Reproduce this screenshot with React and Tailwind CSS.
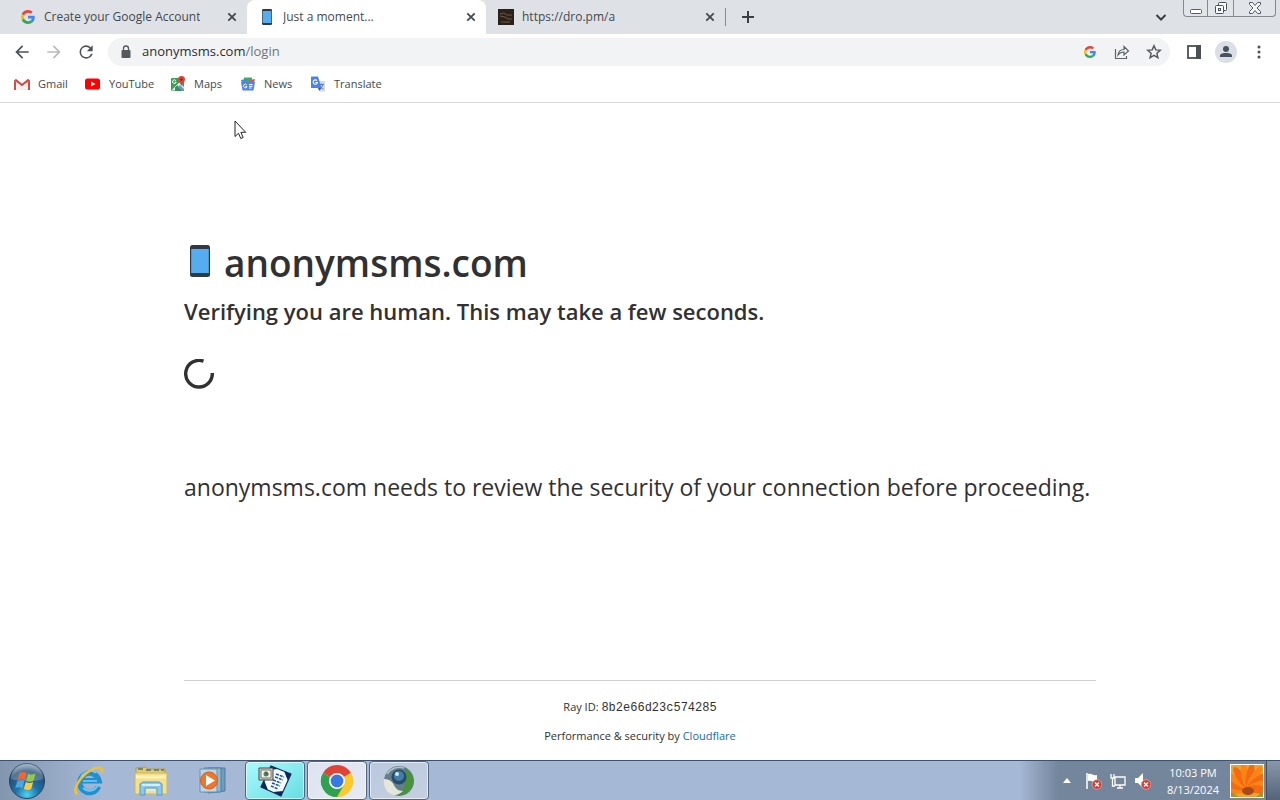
import React from "react";

const GoogleIcon = ({ className }) => (
  <svg viewBox="0 0 48 48" className={className}>
    <path fill="#EA4335" d="M24 9.500c3.500 0 6.700 1.200 9.200 3.600l6.900-6.900C35.900 2.400 30.500 0 24 0 14.600 0 6.500 5.400 2.600 13.200l8 6.200C12.400 13.700 17.700 9.500 24 9.500z" />
    <path fill="#4285F4" d="M47 24.500c0-1.600-.2-3.100-.4-4.500H24v9h12.900c-.6 3-2.300 5.500-4.800 7.200l7.700 6C44.400 38 47 31.800 47 24.500z" />
    <path fill="#FBBC05" d="M10.500 28.600c-.5-1.500-.8-3-.8-4.600s.3-3.100.8-4.600l-8-6.200C.9 16.500 0 20.100 0 24s.9 7.500 2.600 10.800l7.900-6.200z" />
    <path fill="#34A853" d="M24 48c6.500 0 11.900-2.100 15.900-5.800l-7.700-6c-2.200 1.400-4.900 2.300-8.200 2.300-6.300 0-11.600-4.200-13.500-9.900l-8 6.200C6.500 42.600 14.600 48 24 48z" />
  </svg>
);

const PhoneIcon = ({ className }) => (
  <svg viewBox="0 0 20 32" className={className}>
    <rect width="20" height="32" rx="2.500" fill="#2f3a44" />
    <rect x="1.200" y="4" width="17.600" height="24" fill="#55acee" />
  </svg>
);

const DarkSiteIcon = ({ className }) => (
  <svg viewBox="0 0 16 16" className={className}>
    <rect width="16" height="16" fill="#2a211c" />
    <path d="M2 5l4-1 3 2h5M2 7l5 1 3 2h4M3 13h9" stroke="#8a6742" fill="none" strokeWidth=".8" />
  </svg>
);

const CloseIcon = () => (
  <svg viewBox="0 0 10 10" className="size-[10px]">
    <path d="M1.300 1.300l7.400 7.400M8.700 1.300L1.300 8.700" stroke="#45494d" strokeWidth="1.800" />
  </svg>
);

const BackIcon = ({ className }) => (
  <svg viewBox="0 0 24 24" className={className} fill="currentColor">
    <path d="M20 11H7.830l5.590-5.590L12 4l-8 8 8 8 1.410-1.410L7.830 13H20v-2z" />
  </svg>
);

const ReloadIcon = () => (
  <svg viewBox="0 0 24 24" className="size-5" fill="#4d5156">
    <path d="M17.650 6.350A7.960 7.960 0 0012 4a8 8 0 108 10h-2.200A6 6 0 1112 6c1.660 0 3.140.690 4.220 1.780L13 11h7V4l-2.350 2.350z" />
  </svg>
);

const GmailIcon = () => (
  <svg viewBox="0 0 16 12" className="h-3 w-4">
    <path d="M0 1.500V12h2.600V4.600z" fill="#c5524a" />
    <path d="M16 1.500V12h-2.600V4.600z" fill="#c5524a" />
    <path d="M1.200 1.600L8 7l6.800-5.400" fill="none" stroke="#d9443a" strokeWidth="2" />
    <path d="M2 4v8h12V4L8 8.800z" fill="#f4f1f1" />
  </svg>
);

const YouTubeIcon = () => (
  <svg viewBox="0 0 16 12" className="h-3 w-4">
    <rect width="15" height="11" y=".5" rx="2.500" fill="#f00" />
    <path d="M6 3.500v5L10.500 6z" fill="#fff" />
  </svg>
);

const MapsIcon = () => (
  <svg viewBox="0 0 16 16" className="size-4">
    <rect x="1" y="2" width="13" height="13" rx="1" fill="#3f9d5b" />
    <path d="M2 14L9.500 6.500 14 11v3.500H2z" fill="#e4e7ea" />
    <path d="M5 11l2-2 5.500 6H5z" fill="#3c8f5b" />
    <path d="M10 9l4 4v2h-2L8 11z" fill="#6f93cf" />
    <path d="M1.500 14.500L9 7" stroke="#f4d35e" fill="none" />
    <path d="M5.800 4.600a1.800 1.800 0 10.300 1.600H4.700" stroke="#fff" fill="none" />
    <path d="M11.500 0A3.500 3.500 0 008 3.500c0 2.300 2.800 3.500 3.500 6.500.7-3 3.500-4.200 3.500-6.500A3.500 3.500 0 0011.500 0z" fill="#df4236" />
    <circle cx="11.500" cy="3.500" r="1.200" fill="#8f271f" />
  </svg>
);

const NewsIcon = () => (
  <svg viewBox="0 0 16 16" className="size-4">
    <path d="M4 1.500h8V7H4z" fill="#42a865" />
    <path d="M1 4l4-1 3 4H2z" fill="#4a86e8" />
    <path d="M10 4l5-1-1 4H9z" fill="#df5148" />
    <path d="M1 6h14l-1.500 8.500h-11z" fill="#4c84e8" />
    <path d="M6.700 9a1.800 1.800 0 10.300 1.500H5.500M9 8.500h3.500M9 10.300h3.500M9 12h2.500" stroke="#fff" fill="none" />
  </svg>
);

const TranslateIcon = () => (
  <svg viewBox="0 0 16 16" className="size-4">
    <path d="M6 5h8.500l.5.5V15l-.5.500H10z" fill="#d5d9df" />
    <path d="M8.500 8.500H14M11.300 7.500v1M13 8.500c-.5 2-2 3.500-3.500 4.500M10 10c1 1.500 2 2.300 3.500 3" stroke="#6c7a8c" fill="none" />
    <path d="M1.500.500H8L11.500 12h-10L1 11.500V1z" fill="#4a83e8" />
    <path d="M7 4.600a2.200 2.200 0 10.500 1.900H5.300" stroke="#fff" fill="none" strokeWidth="1.100" />
    <path d="M8 12h3.500L9.200 15z" fill="#3057b5" />
  </svg>
);

const ErrorBadge = () => (
  <g>
    <circle cx="12" cy="12.500" r="4.800" fill="#cf3d34" stroke="#e9b0ab" strokeWidth=".7" />
    <path d="M10 10.500l4 4M14 10.500l-4 4" stroke="#fff" strokeWidth="1.500" />
  </g>
);

const StartIcon = () => (
  <svg viewBox="0 0 38 38" className="size-[38px]">
    <defs>
      <radialGradient id="orb" cx="50%" cy="90%" r="85%">
        <stop offset="0" stopColor="#4fd3f5" />
        <stop offset=".4" stopColor="#1f6fa5" />
        <stop offset=".8" stopColor="#244e74" />
        <stop offset="1" stopColor="#7f9cb5" />
      </radialGradient>
    </defs>
    <circle cx="19" cy="19" r="17.500" fill="url(#orb)" stroke="#27425c" />
    <path d="M3 17a16 16 0 0132 0c-9 3-23 3-32 0z" fill="#fff" opacity=".22" />
    <path d="M11.500 11c2.500-1.500 4.500-1.300 7 0l-1.800 7c-2.500-1.300-4.500-1.400-7.200 0z" fill="#ee6631" />
    <path d="M20 11.700c2.500 1.300 4.600 1.300 7.500-.2l-2 7.200c-2.700 1.300-4.700 1.300-7.300 0z" fill="#95c945" />
    <path d="M9.200 19.300c2.500-1.300 4.700-1.300 7.100 0l-1.900 7c-2.300-1.300-4.500-1.400-7.200-.100z" fill="#4da5e2" />
    <path d="M17.800 20c2.500 1.300 4.700 1.300 7.400 0l-2 7c-2.700 1.300-4.700 1.300-7.300 0z" fill="#fcca3c" />
  </svg>
);

const ExplorerIcon = () => (
  <svg viewBox="0 0 32 32" className="size-8">
    <path d="M25.500 21.500A9.700 9.700 0 1126 15.800H9" fill="none" stroke="#238ed0" strokeWidth="5.500" />
    <path d="M24.500 20.500A9 9 0 0110 23" fill="none" stroke="#65c9f5" strokeWidth="2" />
    <path d="M8 12c2-5 10-8 15-4M10 16h14" fill="none" stroke="#78cff4" strokeWidth="1.500" />
    <path d="M4.500 29C-1 27 5 15 13 8.500 21 2 31 0 29 8" fill="none" stroke="#efc135" strokeWidth="2.600" />
  </svg>
);

const FolderIcon = () => (
  <svg viewBox="0 0 34 32" className="h-8 w-[34px]">
    <path d="M2 3l9-1 3 2h17v6H2z" fill="#ddca72" stroke="#b49b4d" />
    <path d="M4 4h5M12 5h5M20 5h5M27 5h3" stroke="#5c7550" strokeWidth="1.500" />
    <path d="M1 8h32v21H1z" fill="#f3df8e" stroke="#cfb65e" />
    <path d="M2 12h30" stroke="#fff2b5" strokeWidth="3" />
    <path d="M6 30V19l3-2h16l3 2v11h-5v-7H11v7z" fill="#8ac9ec" stroke="#5999c2" />
    <path d="M8 20h18M13 25h8" stroke="#d1effb" strokeWidth="2" />
  </svg>
);

const MediaIcon = () => (
  <svg viewBox="0 0 30 30" className="size-[30px]">
    <path d="M10 2h17v23l-17 2z" fill="#719dbb" stroke="#507d9e" />
    <path d="M6 2h17v24H6z" fill="#8cb9d3" stroke="#537f9f" />
    <path d="M2 3h17v23H2z" fill="#bdd6e4" stroke="#6d94ad" />
    <circle cx="11" cy="14.500" r="8.500" fill="#ec782c" stroke="#d65c21" />
    <path d="M8 9v11l9-5.500z" fill="#fff" />
  </svg>
);

const DocumentIcon = () => (
  <svg viewBox="0 0 36 36" className="size-9">
    <path d="M14 3l20 8-10 22L4 24z" fill="#f1fcff" stroke="#10295a" strokeWidth="1.200" />
    <path d="M14 3l7 3-9 1zM34 11l-3 7-4-10zM24 33l-8-4 10-1zM4 24l3-7 4 10z" fill="#0d2759" />
    <path d="M19 11l8 3M18 14l8 3M16 17l8 3M15 20l8 3M14 23l7 3" stroke="#244b9a" strokeWidth="1.500" strokeDasharray="3 1" />
    <path d="M2 5h14v12H2z" fill="#d3d3c8" stroke="#444" />
    <path d="M4 7h10v8H4z" fill="#f2f5e9" stroke="#777" />
    <circle cx="9" cy="11" r="2.500" fill="#3e8b67" />
    <path d="M9 8.500v2.500h2.500" stroke="#a62b36" fill="none" />
  </svg>
);

const ChromeIcon = () => (
  <svg viewBox="0 0 34 34" className="size-[34px]">
    <path d="M17 17L3.140 9A16 16 0 0130.860 9z" fill="#df4435" />
    <path d="M17 17L30.860 9A16 16 0 0117 33z" fill="#fbc929" />
    <path d="M17 17v16A16 16 0 013.140 9z" fill="#30a14e" />
    <path d="M17 9h13.860L24 21 17 33A16 16 0 0030.860 9z" fill="#fbc929" />
    <path d="M3.140 9L10 21l7 4 7-4-7 12A16 16 0 013.140 9z" fill="#30a14e" />
    <circle cx="17" cy="17" r="8" fill="#fff" />
    <circle cx="17" cy="17" r="6.400" fill="#3778e5" />
  </svg>
);

const GlobeIcon = () => (
  <svg viewBox="0 0 32 32" className="size-8">
    <circle cx="16" cy="16" r="15" fill="#637f8c" />
    <path d="M22 3c8 5 11 13 6 21-4 6-10 7-14 6 9-4 8-13 8-27z" fill="#49913d" />
    <path d="M1 14c7 0 9 4 11 8 2 3 5 4 8 4-5 5-10 5-14 2s-6-9-5-14z" fill="#e5e6d9" />
    <circle cx="16" cy="12" r="7.500" fill="#294b68" />
    <circle cx="16" cy="11" r="5" fill="#417fa9" />
    <circle cx="14" cy="9" r="2" fill="#c6e9f5" />
    <path d="M4 9c4-6 11-8 17-6" fill="none" stroke="#afc0c6" strokeWidth="1.500" />
  </svg>
);

const FlowerIcon = () => (
  <svg viewBox="0 0 32 32" className="size-8">
    <rect width="32" height="32" fill="#e9a62f" />
    {[-100, -78, -56, -34, -12, 10, 32, 54, 76, 98].map((angle, i) => (
      <ellipse
        key={angle}
        cx="17"
        cy="11"
        rx="4"
        ry="13"
        fill={i % 2 ? "#f26a12" : "#fb8414"}
        transform={`rotate(${angle} 17 23)`}
      />
    ))}
    <ellipse cx="17" cy="26" rx="6" ry="4" fill="#a8481b" />
    <path d="M0 27l8 5H0zM32 27l-7 5h7z" fill="#9b962d" />
  </svg>
);

const tabs = [
  { title: "Create your Google Account", icon: <GoogleIcon className="size-[14px]" /> },
  { title: "Just a moment...", icon: <PhoneIcon className="h-4 w-3" />, active: true },
  { title: "https://dro.pm/a", icon: <DarkSiteIcon className="size-4" /> },
];

const bookmarks = [
  { label: "Gmail", icon: <GmailIcon />, width: "w-[71px]" },
  { label: "YouTube", icon: <YouTubeIcon />, width: "w-[85px]" },
  { label: "Maps", icon: <MapsIcon />, width: "w-[70px]" },
  { label: "News", icon: <NewsIcon />, width: "w-[70px]" },
  { label: "Translate", icon: <TranslateIcon />, width: "w-[80px]" },
];

const pinned = [
  { name: "Internet Explorer", icon: <ExplorerIcon /> },
  { name: "Windows Explorer", icon: <FolderIcon /> },
  { name: "Media Player", icon: <MediaIcon /> },
];

const running = [
  { name: "Documents", icon: <DocumentIcon />, color: "from-[#a8fbfa] to-[#67dce5]" },
  { name: "Google Chrome", icon: <ChromeIcon />, color: "from-[#dce3f0] to-[#e7eaf4]" },
  { name: "Network", icon: <GlobeIcon />, color: "from-[#b9c9df] to-[#c5cfe0]" },
];

const TabStrip = () => (
  <header className="flex h-[34px] bg-[#dee1e6] pl-2">
    <div className="flex" role="tablist">
      {tabs.map((tab) => (
        <div
          key={tab.title}
          className={`flex h-[34px] w-[239px] items-center ${
            tab.active ? "rounded-t-lg bg-white" : ""
          }`}
        >
          <button
            role="tab"
            aria-selected={!!tab.active}
            className="flex min-w-0 flex-1 items-center gap-2 pl-3 text-left text-xs text-[#45494d]"
          >
            <span className="flex w-4 justify-center">{tab.icon}</span>
            <span className="truncate">{tab.title}</span>
          </button>
          <button aria-label="Close tab" className="mr-[9px] p-px">
            <CloseIcon />
          </button>
        </div>
      ))}
    </div>
    <div className="my-2 w-px bg-[#898d91]" />
    <button aria-label="New tab" className="px-4">
      <svg viewBox="0 0 12 12" className="size-3">
        <path d="M6 0v12M0 6h12" stroke="#3c4043" strokeWidth="2" />
      </svg>
    </button>
    <button aria-label="Search tabs" className="ml-auto px-4">
      <svg viewBox="0 0 12 12" className="size-3">
        <path d="M1.500 4L6 8.500 10.500 4" fill="none" stroke="#3c4043" strokeWidth="2" />
      </svg>
    </button>
    <div className="mr-1 flex h-[17px] divide-x divide-[#83898f] rounded-b border border-t-0 border-[#83898f] bg-[#e1e4e8]">
      <button aria-label="Minimize" className="flex w-6 items-center justify-center">
        <svg viewBox="0 0 12 12" className="size-3">
          <rect x=".5" y="7.500" width="11" height="4" rx="1" fill="#fff" stroke="#555b62" />
        </svg>
      </button>
      <button aria-label="Restore" className="flex w-[26px] items-center justify-center">
        <svg viewBox="0 0 14 14" className="size-[14px]" fill="#f8f9fa" stroke="#4b5056">
          <rect x="4.500" y="1.500" width="8" height="8" rx="1" />
          <rect x="1.500" y="4.500" width="8" height="8" rx="1" />
          <rect x="4.500" y="7.500" width="2" height="2" />
        </svg>
      </button>
      <button aria-label="Close" className="flex w-[41px] items-center justify-center">
        <svg viewBox="0 0 14 12" className="h-3 w-[14px]">
          <path d="M1.500.500h3L7 3.500l2.500-3h3v2L9 6l3.500 3.500v2h-3L7 8.500l-2.500 3h-3v-2L5 6 1.500 2.500z" fill="#f8f9fa" stroke="#555b62" />
        </svg>
      </button>
    </div>
  </header>
);

const Toolbar = () => (
  <div className="flex h-9 items-center bg-white pl-3 pr-[13px]">
    <button aria-label="Back" className="mr-3"><BackIcon className="size-5 text-[#4d5156]" /></button>
    <button aria-label="Forward" className="mr-3"><BackIcon className="size-5 rotate-180 text-[#b8babd]" /></button>
    <button aria-label="Reload" className="mr-3"><ReloadIcon /></button>
    <div className="flex h-7 flex-1 items-center rounded-full bg-[#f1f3f4] pl-[13px] pr-2">
      <svg viewBox="0 0 10 14" className="h-[14px] w-[10px]">
        <path d="M2.500 6V3.500a2.500 2.500 0 015 0V6" fill="none" stroke="#55595e" strokeWidth="1.300" />
        <rect x=".5" y="5" width="9" height="8" rx="1" fill="#55595e" />
      </svg>
      <a href="#login" className="ml-[11px] flex-1 text-[13px] text-[#2b2e31]">
        anonymsms.com<span className="text-[#707478]">/login</span>
      </a>
      <button aria-label="Google search" className="mr-[18px]"><GoogleIcon className="size-3" /></button>
      <button aria-label="Share" className="mr-4">
        <svg viewBox="0 0 16 16" className="size-4" fill="none" stroke="#5f6368" strokeWidth="1.200">
          <path d="M1.500 5v9.500h11V12M4 11c.5-4 3-5.500 6-5.500V2.500L14.500 7 10 11V8C7.500 8 5.500 9 4 11z" />
        </svg>
      </button>
      <button aria-label="Bookmark this tab">
        <svg viewBox="0 0 16 16" className="size-4" fill="none" stroke="#55595e" strokeWidth="1.500">
          <path d="M8 1.800l1.800 4.100 4.500.4-3.400 3 1 4.400L8 11.400l-3.900 2.300 1-4.400-3.400-3 4.500-.4z" />
        </svg>
      </button>
    </div>
    <button aria-label="Side panel" className="ml-[17px]">
      <svg viewBox="0 0 14 14" className="size-[14px]">
        <rect x="1" y="1" width="12" height="12" fill="#fff" stroke="#4b5055" strokeWidth="1.800" />
        <path d="M9 0h5v14H9z" fill="#4b5055" />
      </svg>
    </button>
    <button aria-label="Profile" className="ml-[14px] flex size-[22px] items-center justify-center rounded-full bg-[#dcdee6]">
      <svg viewBox="0 0 14 14" className="size-[14px]" fill="#485064">
        <circle cx="7" cy="4" r="3" />
        <path d="M1 12V10.500C1 8.500 5 8 7 8s6 .5 6 2.500V12z" />
      </svg>
    </button>
    <button aria-label="Menu" className="ml-[14px]">
      <svg viewBox="0 0 16 16" className="size-4" fill="#4b5055">
        <circle cx="8" cy="3" r="1.500" />
        <circle cx="8" cy="8" r="1.500" />
        <circle cx="8" cy="13" r="1.500" />
      </svg>
    </button>
  </div>
);

const BookmarksBar = () => (
  <nav className="flex h-[33px] items-center border-b border-[#d6d8da] bg-white pb-1 pl-[14px]">
    {bookmarks.map((item) => (
      <a
        key={item.label}
        href={`#${item.label}`}
        className={`flex items-center gap-2 text-[11px] text-[#45494d] ${item.width}`}
      >
        <span className="shrink-0">{item.icon}</span>
        {item.label}
      </a>
    ))}
  </nav>
);

const Challenge = () => (
  <div className="mx-auto flex w-full max-w-[960px] flex-1 flex-col px-6 text-[#313131]">
    <main className="flex-1 pt-[130px]">
      <h1 className="flex items-center gap-[14px] text-[37px] leading-[60px] font-semibold">
        <PhoneIcon className="mb-1 ml-[6px] h-8 w-5" />
        anonymsms.com
      </h1>
      <h2 className="text-[22px] leading-9 font-semibold">
        Verifying you are human. This may take a few seconds.
      </h2>
      <svg viewBox="0 0 30 30" className="mt-[30px] size-[30px]">
        <path d="M19.500 2.200A13.300 13.300 0 1028.300 14" fill="none" stroke="#313131" strokeWidth="3.400" />
      </svg>
      <p className="mt-20 text-[23px] leading-9">
        anonymsms.com needs to review the security of your connection before proceeding.
      </p>
    </main>
    <footer className="border-t border-[#d0d0d0] pt-4 pb-[14px] text-center text-[11px] leading-5">
      <p>
        Ray ID: <code className="font-['Liberation_Mono',monospace] text-xs leading-5">8b2e66d23c574285</code>
      </p>
      <p className="mt-2">
        Performance &amp; security by{" "}
        <a href="#cloudflare" className="text-[#1668b5]">Cloudflare</a>
      </p>
    </footer>
  </div>
);

const Taskbar = () => (
  <footer className="flex h-10 items-center border-t border-[#3d5170] bg-linear-to-r from-[#8296af] from-0% via-[#a5b8d6] via-8% to-[#a5b8d6]">
    <button aria-label="Start" className="ml-2 mr-3"><StartIcon /></button>
    {pinned.map((app) => (
      <button key={app.name} aria-label={app.name} className="flex w-[62px] justify-center">
        {app.icon}
      </button>
    ))}
    <div className="ml-px flex gap-[2px]">
      {running.map((app) => (
        <button
          key={app.name}
          aria-label={app.name}
          className={`flex h-[39px] w-[60px] items-center justify-center rounded-sm border border-[#4f6685] bg-linear-to-br inset-ring inset-ring-white/60 ${app.color}`}
        >
          {app.icon}
        </button>
      ))}
    </div>
    <div className="ml-auto flex h-full items-center bg-linear-to-r from-[#a5b8d6] to-[#74869c] to-15% pl-[44px]">
      <button aria-label="Show hidden icons" className="mr-[14px]">
        <svg viewBox="0 0 8 5" className="h-[5px] w-2"><path d="M4 0l4 5H0z" fill="#fff" /></svg>
      </button>
      <button aria-label="Action center" className="mr-2">
        <svg viewBox="0 0 17 18" className="h-[18px] w-[17px]">
          <path d="M2 1v16" stroke="#fff" strokeWidth="1.500" />
          <path d="M3 2c4-1 5 2 9 1v7c-4 1-5-2-9-1z" fill="#fff" />
          <ErrorBadge />
        </svg>
      </button>
      <button aria-label="Network" className="mr-2">
        <svg viewBox="0 0 16 16" className="size-4" fill="none" stroke="#fff" strokeWidth="1.300">
          <path d="M5 4h10v8H5zM7 15h6M10 12v3M1 1v4h3V1M2.500 5v8H5" />
        </svg>
      </button>
      <button aria-label="Volume" className="mr-4">
        <svg viewBox="0 0 17 18" className="h-[18px] w-[17px]">
          <path d="M1 6h3l5-5v15l-5-5H1z" fill="#fff" />
          <ErrorBadge />
        </svg>
      </button>
      <button className="text-center text-[11px] leading-[17px] text-white">
        <span className="block">10:03 PM</span>
        <span className="block">8/13/2024</span>
      </button>
      <button aria-label="Picture" className="ml-[11px] border border-white"><FlowerIcon /></button>
      <button aria-label="Show desktop" className="ml-[2px] h-full w-[14px] border-l border-[#414f61] bg-linear-to-b from-[#8997a9] to-[#55647a]" />
    </div>
  </footer>
);

const App = () => {
  return (
    <div className="relative flex min-h-screen flex-col bg-white font-['Open_Sans','Noto_Sans',sans-serif]">
      <TabStrip />
      <Toolbar />
      <BookmarksBar />
      <Challenge />
      <Taskbar />
      <svg viewBox="0 0 13 20" className="pointer-events-none absolute top-[120px] left-[234px] h-5 w-[13px]">
        <path d="M1 1v15.500l3.500-3.200 2.300 5.200 2.400-1-2.300-5.200h4.800z" fill="#fff" stroke="#222" />
      </svg>
    </div>
  );
};

export default App;
